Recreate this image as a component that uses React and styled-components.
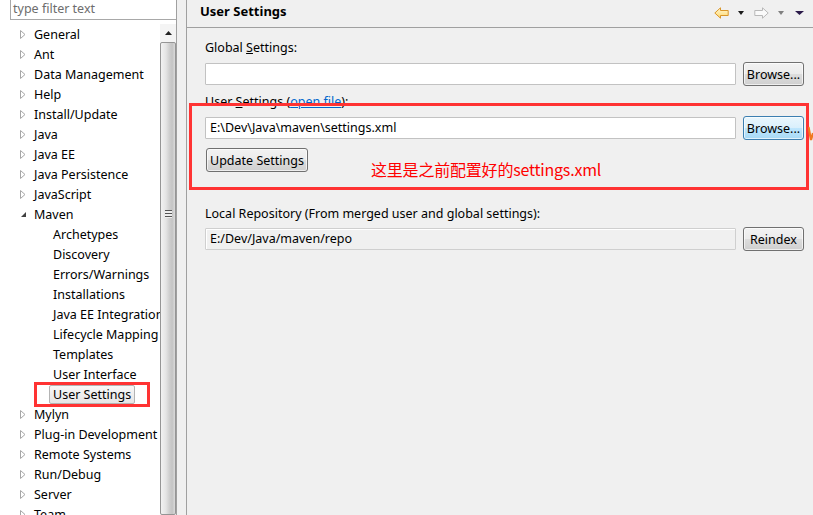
import React from "react";
import styled, { createGlobalStyle } from "styled-components";

const GlobalStyle = createGlobalStyle`
  html, body { margin: 0; padding: 0; background: #f0f0f0; }
  body { font-family: "Noto Sans", "Open Sans", "Noto Sans CJK SC", sans-serif; font-size: 12.5px; color: #000; }
  * { box-sizing: border-box; }
`;

const Window = styled.div`
  position: relative;
  width: 813px;
  height: 515px;
  overflow: hidden;
  display: flex;
  background: #f0f0f0;
`;

const LeftPanel = styled.div`
  width: 177px;
  flex: none;
  background: #fff;
  border-right: 1px solid #a0a0a0;
  display: flex;
  flex-direction: column;
`;

const Filter = styled.div`
  margin-left: 10px;
  height: 21px;
  border: 1px solid #a8a8a8;
  border-top: none;
  border-right: none;
  color: #6d6d6d;
  padding: 0 0 0 2px;
  font-size: 12.5px;
  line-height: 19px;
  margin-top: -1px;
`;

const TreeArea = styled.div`
  flex: 1;
  display: flex;
  margin-top: 4px;
  min-height: 0;
`;

const TreeList = styled.div`
  flex: 1;
  overflow: hidden;
  white-space: nowrap;
`;

const Row = styled.div`
  height: 20px;
  display: flex;
  align-items: center;
  padding-left: ${(p) => 20 + p.$level * 19}px;
  font-size: 12.5px;
`;

const Twisty = styled.span`
  width: 10px;
  flex: none;
  display: flex;
  align-items: center;
`;

const Label = styled.span`
  padding: 0 3px;
  line-height: 17px;
  border: 1px solid ${(p) => (p.$selected ? "#b4b4b4" : "transparent")};
  border-radius: 2px;
  background: ${(p) =>
    p.$selected ? "linear-gradient(#f8f8f8, #e6e6e6)" : "transparent"};
  color: #000;
`;

const Scrollbar = styled.div`
  width: 16px;
  flex: none;
  display: flex;
  flex-direction: column;
  background: #f0f0f0;
`;

const ScrollArrow = styled.div`
  height: 18px;
  display: flex;
  align-items: center;
  justify-content: center;
  background: #f4f4f4;
`;

const Thumb = styled.div`
  flex: 1;
  border: 1px solid #959595;
  border-radius: 2px;
  background: linear-gradient(to right, #f2f2f2 0%, #e4e4e4 35%, #cfcfcf 60%, #c4c4c4 80%, #dadada 100%);
  display: flex;
  align-items: center;
  justify-content: center;
`;

const Grip = styled.div`
  width: 7px;
  height: 8px;
  margin-bottom: 130px;
  background: repeating-linear-gradient(#555 0 1px, #eee 1px 3px);
`;

const Sash = styled.div`
  width: 10px;
  flex: none;
  background: #f0f0f0;
  border-right: 1px solid #a0a0a0;
`;

const RightPanel = styled.div`
  flex: 1;
  display: flex;
  flex-direction: column;
  background: #f0f0f0;
`;

const Header = styled.div`
  height: 28px;
  flex: none;
  border-bottom: 1px solid #a0a0a0;
  display: flex;
  align-items: center;
  justify-content: space-between;
  padding: 0 9px 5px 13px;
`;

const Title = styled.span`
  font-weight: bold;
  font-size: 13px;
`;

const Toolbar = styled.div`
  display: flex;
  align-items: center;
  margin-top: 3px;
`;

const ToolIcon = styled.span`
  display: flex;
  align-items: center;
  margin-left: ${(p) => p.$ml || 0}px;
`;

const Content = styled.div`
  padding: 12px 9px 0 18px;
  display: flex;
  flex-direction: column;
`;

const FieldLabel = styled.div`
  height: 16px;
  line-height: 16px;
  font-size: 12.5px;
  color: #000;
  margin-top: ${(p) => p.$mt || 0}px;
`;

const Mn = styled.span`
  text-decoration: underline;
`;

const Link = styled.span`
  color: #0066cc;
  text-decoration: underline;
`;

const FieldRow = styled.div`
  display: grid;
  grid-template-columns: 1fr 61px;
  gap: 7px;
  align-items: center;
  height: 24px;
  margin-top: ${(p) => p.$mt || 0}px;
`;

const TextInput = styled.div`
  height: 22px;
  border: 1px solid ${(p) => (p.$disabled ? "#cfcfcf" : "#c2c2c2")};
  box-shadow: ${(p) => (p.$disabled ? "inset 1px 1px 0 #fff" : "none")};
  border-radius: 1px;
  background: ${(p) => (p.$disabled ? "#f0f0f0" : "#fff")};
  padding-left: 4px;
  line-height: 20px;
  font-size: 12.5px;
  color: #000;
  white-space: nowrap;
  overflow: hidden;
`;

const Button = styled.div`
  height: 24px;
  border: 1px solid ${(p) => (p.$focus ? "#3c7fb1" : "#707070")};
  border-radius: 3px;
  background: ${(p) =>
    p.$focus
      ? "linear-gradient(#eaf6fd 0%, #d9f0fc 50%, #bee6fd 51%, #a7d9f5 100%)"
      : "linear-gradient(#f2f2f2 0%, #ebebeb 50%, #dddddd 51%, #cfcfcf 100%)"};
  box-shadow: inset 0 0 0 1px rgba(255, 255, 255, 0.65);
  display: flex;
  align-items: center;
  justify-content: center;
  font-size: 12.5px;
  color: #000;
  white-space: nowrap;
`;

const UpdateButton = styled(Button)`
  align-self: flex-start;
  margin-top: 8px;
  margin-left: 1px;
  width: 102px;
`;

const RedBox = styled.div`
  position: absolute;
  left: ${(p) => p.$x}px;
  top: ${(p) => p.$y}px;
  width: ${(p) => p.$w}px;
  height: ${(p) => p.$h}px;
  border: 3px solid #ff3333;
  pointer-events: none;
`;

const Note = styled.div`
  position: absolute;
  left: 371px;
  top: 157px;
  color: #ff0000;
  font-family: "Noto Sans CJK SC", "Noto Sans", sans-serif;
  font-size: 16px;
  letter-spacing: -0.2px;
  line-height: 24px;
  white-space: nowrap;
`;

const OrangeMark = styled.svg`
  position: absolute;
  left: 808px;
  top: 125px;
`;

const HollowArrow = () => (
  <svg width="6" height="9" viewBox="0 0 6 9">
    <path d="M0.5 0.5 L5 4.5 L0.5 8.5 Z" fill="#fff" stroke="#a6a6a6" strokeWidth="1" />
  </svg>
);

const OpenArrow = () => (
  <svg width="7" height="7" viewBox="0 0 7 7">
    <path d="M6 1 L6 6 L1 6 Z" fill="#404040" />
  </svg>
);

const tree = [
  { t: "General", l: 0, c: true },
  { t: "Ant", l: 0, c: true },
  { t: "Data Management", l: 0, c: true },
  { t: "Help", l: 0, c: true },
  { t: "Install/Update", l: 0, c: true },
  { t: "Java", l: 0, c: true },
  { t: "Java EE", l: 0, c: true },
  { t: "Java Persistence", l: 0, c: true },
  { t: "JavaScript", l: 0, c: true },
  { t: "Maven", l: 0, o: true },
  { t: "Archetypes", l: 1 },
  { t: "Discovery", l: 1 },
  { t: "Errors/Warnings", l: 1 },
  { t: "Installations", l: 1 },
  { t: "Java EE Integration", l: 1 },
  { t: "Lifecycle Mapping", l: 1 },
  { t: "Templates", l: 1 },
  { t: "User Interface", l: 1 },
  { t: "User Settings", l: 1, s: true },
  { t: "Mylyn", l: 0, c: true },
  { t: "Plug-in Development", l: 0, c: true },
  { t: "Remote Systems", l: 0, c: true },
  { t: "Run/Debug", l: 0, c: true },
  { t: "Server", l: 0, c: true },
  { t: "Team", l: 0, c: true },
];

const Triangle = ({ color, w = 6 }) => (
  <svg width={w} height="4" viewBox={`0 0 ${w} 4`}>
    <path d={`M0 0 L${w} 0 L${w / 2} 4 Z`} fill={color} />
  </svg>
);

export default function App() {
  return (
    <Window>
      <GlobalStyle />
      <LeftPanel>
        <Filter>type filter text</Filter>
        <TreeArea>
          <TreeList>
            {tree.map((n) => (
              <Row key={n.t} $level={n.l}>
                <Twisty>{n.c ? <HollowArrow /> : n.o ? <OpenArrow /> : null}</Twisty>
                <Label $selected={n.s}>{n.t}</Label>
              </Row>
            ))}
          </TreeList>
          <Scrollbar>
            <ScrollArrow>
              <svg width="7" height="4" viewBox="0 0 7 4">
                <path d="M0 4 L3.5 0 L7 4 Z" fill="#222" />
              </svg>
            </ScrollArrow>
            <Thumb>
              <Grip />
            </Thumb>
          </Scrollbar>
        </TreeArea>
      </LeftPanel>
      <Sash />
      <RightPanel>
        <Header>
          <Title>User Settings</Title>
          <Toolbar>
            <ToolIcon>
              <svg width="15" height="12" viewBox="0 0 15 12">
                <defs>
                  <linearGradient id="bk" x1="0" y1="0" x2="0" y2="1">
                    <stop offset="0" stopColor="#fff8d8" />
                    <stop offset="1" stopColor="#ffd86a" />
                  </linearGradient>
                </defs>
                <path d="M0.8 6 L6.5 0.8 L6.5 3.5 L14.2 3.5 L14.2 8.5 L6.5 8.5 L6.5 11.2 Z" fill="url(#bk)" stroke="#d9962a" strokeWidth="1" strokeLinejoin="round" />
              </svg>
            </ToolIcon>
            <ToolIcon $ml={9}>
              <Triangle color="#1a1a1a" />
            </ToolIcon>
            <ToolIcon $ml={10}>
              <svg width="15" height="12" viewBox="0 0 15 12">
                <path d="M14.2 6 L8.5 0.8 L8.5 3.5 L0.8 3.5 L0.8 8.5 L8.5 8.5 L8.5 11.2 Z" fill="#fafafa" stroke="#b8b8b8" strokeWidth="1" strokeLinejoin="round" />
              </svg>
            </ToolIcon>
            <ToolIcon $ml={9}>
              <Triangle color="#808080" />
            </ToolIcon>
            <ToolIcon $ml={11}>
              <Triangle color="#2b1a4a" w={9} />
            </ToolIcon>
          </Toolbar>
        </Header>
        <Content>
          <FieldLabel>
            Global <Mn>S</Mn>ettings:
          </FieldLabel>
          <FieldRow $mt={6}>
            <TextInput />
            <Button>Browse...</Button>
          </FieldRow>
          <FieldLabel $mt={8}>
            User <Mn>S</Mn>ettings (<Link>open file</Link>):
          </FieldLabel>
          <FieldRow $mt={6}>
            <TextInput>E:\Dev\Java\maven\settings.xml</TextInput>
            <Button $focus>Browse...</Button>
          </FieldRow>
          <UpdateButton>Update Settings</UpdateButton>
          <FieldLabel $mt={34}>Local Repository (From merged user and global settings):</FieldLabel>
          <FieldRow $mt={5}>
            <TextInput $disabled>E:/Dev/Java/maven/repo</TextInput>
            <Button>Reindex</Button>
          </FieldRow>
        </Content>
      </RightPanel>
      <RedBox $x={34} $y={382} $w={116} $h={25} />
      <RedBox $x={189} $y={103} $w={620} $h={87} />
      <Note>这里是之前配置好的settings.xml</Note>
      <OrangeMark width="5" height="17" viewBox="0 0 5 17">
        <path d="M0.5 2 L3 15 L5 8" fill="none" stroke="#f07820" strokeWidth="2.2" />
      </OrangeMark>
    </Window>
  );
}
